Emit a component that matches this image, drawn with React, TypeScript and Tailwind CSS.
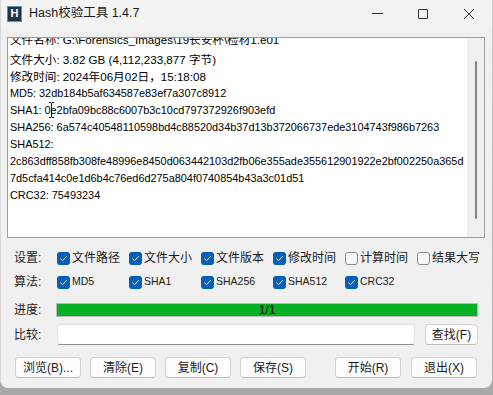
import React from "react";

const lines: { t: string; cjk?: boolean }[] = [
  { t: "文件名称: G:\\Forensics_Images\\19长安杯\\检材1.e01", cjk: true },
  { t: "文件大小: 3.82 GB (4,112,233,877 字节)", cjk: true },
  { t: "修改时间: 2024年06月02日，15:18:08", cjk: true },
  { t: "MD5: 32db184b5af634587e83ef7a307c8912" },
  { t: "SHA1: 0e2bfa09bc88c6007b3c10cd797372926f903efd" },
  { t: "SHA256: 6a574c40548110598bd4c88520d34b37d13b372066737ede3104743f986b7263" },
  { t: "SHA512:" },
  { t: "2c863dff858fb308fe48996e8450d063442103d2fb06e355ade355612901922e2bf002250a365d" },
  { t: "7d5cfa414c0e1d6b4c76ed6d275a804f0740854b43a3c01d51" },
  { t: "CRC32: 75493234" },
];

const settings = [
  { name: "文件路径", on: true },
  { name: "文件大小", on: true },
  { name: "文件版本", on: true },
  { name: "修改时间", on: true },
  { name: "计算时间", on: false },
  { name: "结果大写", on: false },
];

const algos = ["MD5", "SHA1", "SHA256", "SHA512", "CRC32"];

const Check = ({ on }: { on: boolean }) =>
  on ? (
    <span className="w-[13px] h-[13px] rounded-[3px] bg-[#005fb8] flex items-center justify-center shrink-0">
      <svg width="9" height="9" viewBox="0 0 9 9">
        <path d="M1.4 4.6 L3.5 6.7 L7.7 2.3" stroke="white" strokeWidth="1" fill="none" />
      </svg>
    </span>
  ) : (
    <span className="w-[13px] h-[13px] rounded-[3px] border border-[#8b8b8b] bg-[#f7f7f7] shrink-0" />
  );

const Btn = ({ label, w = "w-[66px]" }: { label: string; w?: string }) => (
  <button className={`${w} h-[21px] rounded-[4px] border border-[#d3d3d3] border-b-[#bdbdbd] bg-[#fdfdfd] text-[12px] leading-none text-[#1b1b1b] flex items-center justify-center`}>
    {label}
  </button>
);

export default function App() {
  return (
    <div className="w-[493px] h-[395px] bg-gradient-to-b from-[#cfcfcf] to-[#a9a9a9] font-['Liberation_Sans','Noto_Sans_CJK_SC',sans-serif] overflow-hidden">
      <div className="w-[492px] h-[388px] bg-[#f0f0f0] rounded-b-[8px] border-l border-[#d6d6d6] flex flex-col">
        {/* title bar */}
        <div className="h-[27px] flex items-center bg-[#f3f3f3] pl-[6px]">
          <div className="w-[15px] h-[16px] bg-[#22364a] border border-[#5b8fc4] flex items-center justify-center text-white text-[11px] font-bold leading-none">
            H
          </div>
          <span className="ml-[7px] text-[12.5px] text-[#1a1a1a]">Hash校验工具 1.4.7</span>
          <div className="ml-auto flex h-full">
            <div className="w-[46px] flex items-center justify-center">
              <span className="w-[11px] h-px bg-[#333]" />
            </div>
            <div className="w-[46px] flex items-center justify-center">
              <span className="w-[10px] h-[10px] border border-[#333] rounded-[1px]" />
            </div>
            <div className="w-[46px] flex items-center justify-center">
              <svg width="12" height="12" viewBox="0 0 12 12">
                <path d="M1 1 L11 11 M11 1 L1 11" stroke="#333" strokeWidth="1" />
              </svg>
            </div>
          </div>
        </div>

        {/* output box */}
        <div className="ml-[6px] mt-[10px] w-[478px] h-[201px] border border-[#9c9c9c] bg-white flex overflow-hidden">
          <div className="flex-1 overflow-hidden">
            <div className="-mt-[4px] pl-[2px]">
              {lines.map((l, i) => (
                <div
                  key={i}
                  className={`relative h-[17px] whitespace-nowrap text-black ${i === 0 ? "leading-[12px]" : "leading-[17px]"} ${l.cjk ? "text-[11.6px]" : "text-[10.9px]"}`}
                >
                  {l.t}
                  {i === 4 && (
                    <svg className="absolute left-[39px] top-0" width="5" height="16" viewBox="0 0 5 16">
                      <path d="M0 0.5 H2 M3 0.5 H5 M2.5 1 V15 M0 15.5 H2 M3 15.5 H5" stroke="black" strokeWidth="1" fill="none" />
                    </svg>
                  )}
                </div>
              ))}
            </div>
          </div>
          <div className="w-[17px] bg-[#f0f0f0] pt-[23px] flex justify-center">
            <span className="w-[2px] h-[158px] bg-[#858585] rounded-full" />
          </div>
        </div>

        {/* settings */}
        <div className="mt-[8px] h-[24px] flex items-center text-[12px] text-[#1b1b1b]">
          <span className="w-[56px] pl-[13px]">设置:</span>
          {settings.map((s) => (
            <div key={s.name} className="w-[72px] flex items-center gap-[2px]">
              <Check on={s.on} />
              <span>{s.name}</span>
            </div>
          ))}
        </div>
        <div className="h-[24px] flex items-center text-[12px] text-[#1b1b1b]">
          <span className="w-[56px] pl-[13px]">算法:</span>
          {algos.map((a) => (
            <div key={a} className="w-[72px] flex items-center gap-[2px]">
              <Check on />
              <span className="text-[10.5px]">{a}</span>
            </div>
          ))}
        </div>

        {/* progress */}
        <div className="mt-[8px] h-[16px] flex items-center text-[12px] text-[#1b1b1b]">
          <span className="w-[55px] pl-[13px]">进度:</span>
          <div className="w-[422px] h-[14px] border border-[#bcbcbc] bg-[#06b025] flex items-center justify-center text-[12px] leading-none text-black">
            1/1
          </div>
        </div>

        {/* compare */}
        <div className="mt-[6px] h-[21px] flex items-center text-[12px] text-[#1b1b1b]">
          <span className="w-[56px] pl-[13px]">比较:</span>
          <div className="w-[358px] h-[21px] bg-white rounded-[3px] border border-[#e3e3e3] border-b-[#8a8a8a]" />
          <div className="ml-[10px]">
            <Btn label="查找(F)" w="w-[53px]" />
          </div>
        </div>

        {/* buttons */}
        <div className="mt-[12px] flex pl-[14px] pr-[15px]">
          <div className="flex gap-[9px]">
            <Btn label="浏览(B)..." />
            <Btn label="清除(E)" />
            <Btn label="复制(C)" />
            <Btn label="保存(S)" />
          </div>
          <div className="ml-auto flex gap-[10px]">
            <Btn label="开始(R)" />
            <Btn label="退出(X)" />
          </div>
        </div>
      </div>
    </div>
  );
}
